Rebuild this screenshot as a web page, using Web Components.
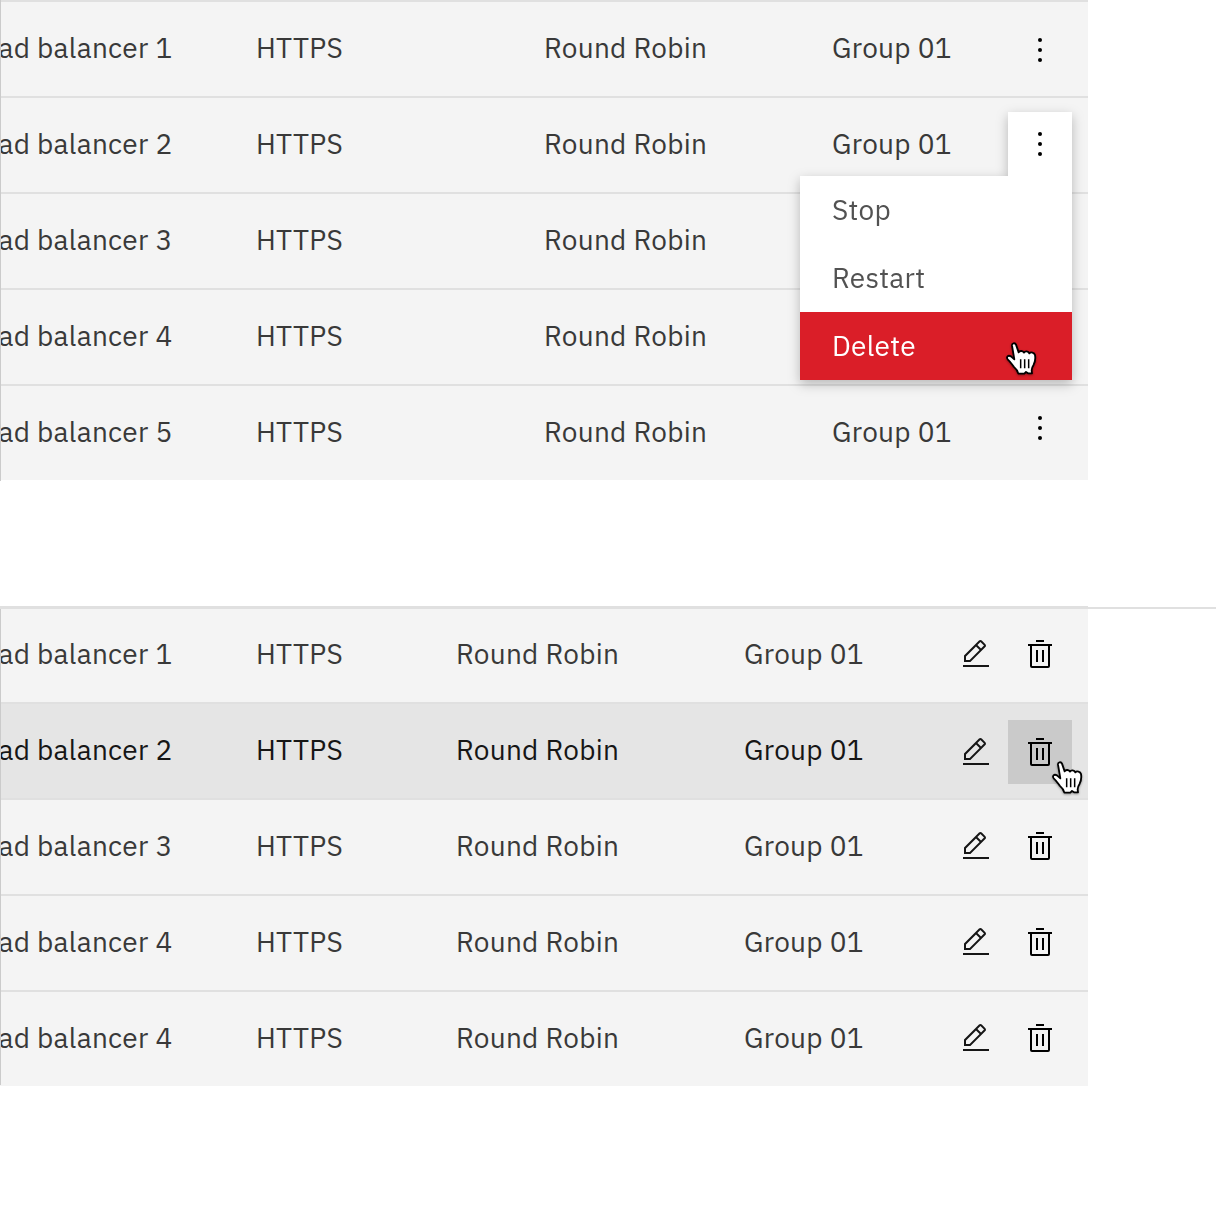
<!DOCTYPE html>
<html lang="en">
<head>
<meta charset="utf-8">
<title>Load balancers</title>
<style>
html,body{margin:0;background:#fff}
body{width:1216px;height:1216px;overflow:hidden;font:400 28px/36px "IBM Plex Sans",Inter,"Noto Sans",sans-serif;letter-spacing:.28px}
</style>
</head>
<body>
<balancer-page></balancer-page>
<script>
function define(name, html) {
  const tpl = document.createElement('template');
  tpl.innerHTML = html;
  customElements.define(name, class extends HTMLElement {
    connectedCallback() {
      if (this.shadowRoot) return;
      this.attachShadow({ mode: 'open' }).append(tpl.content.cloneNode(true));
    }
  });
}

define('icon-overflow', `<style>:host{display:block;width:32px;height:32px}svg{display:block}</style>
<svg width="32" height="32" viewBox="0 0 32 32"><circle cx="16" cy="6" r="2"/><circle cx="16" cy="16" r="2"/><circle cx="16" cy="26" r="2"/></svg>`);

define('icon-edit', `<style>:host{display:block;width:32px;height:32px}svg{display:block}</style>
<svg width="32" height="32" viewBox="0 0 32 32" fill="#161616"><rect x="3" y="27" width="26" height="2"/><path d="M25.4 9c.8-.8.8-2 0-2.8l-3.6-3.6c-.8-.8-2-.8-2.8 0l-15 15V24h6.4zM20.4 4 24 7.6l-3 3L17.4 7zM6 22v-3.6l10-10 3.6 3.6-10 10z"/></svg>`);

define('icon-trash', `<style>:host{display:block;width:32px;height:32px}svg{display:block}</style>
<svg width="32" height="32" viewBox="0 0 32 32"><path d="M12 12h2v12h-2zM18 12h2v12h-2zM4 6v2h2v20a2 2 0 0 0 2 2h16a2 2 0 0 0 2-2V8h2V6zm4 22V8h16v20zM12 2h8v2h-8z"/></svg>`);

define('hand-cursor', `<style>:host{display:block;width:40px;height:40px}svg{display:block;filter:drop-shadow(0 1px 1px rgba(0,0,0,.35))}</style>
<svg width="40" height="40" viewBox="40 30 120 120"><path fill="#fff" stroke="#000" stroke-width="5.500" stroke-linejoin="round" d="M67 47C66 39 76 37 79 44L87 67C90 61 100 62 103 68C106 62 116 63 119 70C123 65 134 67 136 75C138 86 136 96 132 104C128 110 126 114 126 121L127 130H115L109 126L104 131H86C84 122 79 116 72 110C66 102 62 95 54 88C49 81 55 74 64 79L74 88Z"/><path d="M93 88V115M105 88V115M117 88V115" stroke="#000" stroke-width="4.500" fill="none"/></svg>`);

define('row-action', `<style>
:host{display:flex;align-items:center;justify-content:center;width:64px;height:64px;flex:none;position:relative}
:host([active]){background:#cacaca}
</style><slot></slot>`);

define('menu-item', `<style>
:host{display:flex;height:68px;box-sizing:border-box;align-items:center;padding-left:32px;color:#525252;position:relative}
:host([danger]){background:#da1e28;color:#fff}
</style><slot></slot>`);

define('overflow-menu', `<style>
:host{display:flex;flex-direction:column;align-items:flex-end;position:absolute;right:16px;top:14px;width:272px;z-index:2;filter:drop-shadow(0 4px 6px rgba(0,0,0,.25))}
.trigger{width:64px;height:64px;display:flex;align-items:center;justify-content:center;background:#fff}
.list{width:272px;background:#fff}
hand-cursor{position:absolute;left:203px;top:28px}
</style>
<div class="trigger"><icon-overflow></icon-overflow></div>
<div class="list">
<menu-item>Stop</menu-item>
<menu-item>Restart</menu-item>
<menu-item danger>Delete<hand-cursor></hand-cursor></menu-item>
</div>`);

define('data-row', `<style>
:host{display:grid;grid-template-columns:var(--cols);height:96px;box-sizing:border-box;border-top:2px solid #e0e0e0;background:#f4f4f4;color:#393939;position:relative}
:host([first]){border-top-width:var(--first,2px)}
:host([hover]){background:#e5e5e5;color:#161616}
.cell{padding-top:28px;min-width:0;white-space:pre}
.name{margin-left:-1.6px}
:host([first]) .cell{padding-top:calc(30px - var(--first,2px))}
.actions{display:flex;justify-content:flex-end;padding-right:16px}
</style>
<div class="cell name"><slot name="name"></slot></div><div class="cell"><slot name="protocol"></slot></div>
<div class="cell"><slot name="method"></slot></div><div class="cell"><slot name="group"></slot></div>
<div class="actions"><slot name="actions"></slot></div><slot></slot>`);

define('data-table', `<style>
:host{display:block;width:1088px;flex:none;position:relative}
.edge{position:absolute;left:0;top:var(--edge-top,0);bottom:var(--edge-bottom,-1px);width:1px;background:#cbcbcb}
</style><slot></slot><div class="edge"></div>`);

const rowHtml = (n, attrs, group, actions, extra = '') => `<data-row ${attrs}>
<span slot="name">ad balancer ${n}</span>
<span slot="protocol">HTTPS</span>
<span slot="method">Round Robin</span>
${group ? `<span slot="group">${group}</span>` : ''}
${actions}${extra}</data-row>`;

const dots = top => `<row-action slot="actions" style="margin-top:${top}px"><icon-overflow></icon-overflow></row-action>`;
const tools = (top, hover) => `<row-action slot="actions" style="margin-top:${top}px"><icon-edit></icon-edit></row-action>
<row-action slot="actions" style="margin-top:${top}px" ${hover ? 'active' : ''}><icon-trash></icon-trash>${hover ? '<hand-cursor style="position:absolute;left:41px;top:39px"></hand-cursor>' : ''}</row-action>`;

define('balancer-page', `<style>
:host{display:flex;flex-direction:column;width:1216px;gap:126px}
.band{display:flex;align-items:flex-start}
.one{--cols:256px 288px 288px 176px 80px}
.two{--cols:256px 200px 288px 200px 144px;--first:3px;--edge-top:3px;--edge-bottom:1px}
.rule{flex:1;height:2px;margin-top:1px;background:#e0e0e0}
</style>
<data-table class="one">
${rowHtml(1, 'first', 'Group 01', dots(16))}
${rowHtml(2, '', 'Group 01', '', '<overflow-menu></overflow-menu>')}
${rowHtml(3, '', '', '')}
${rowHtml(4, '', '', '')}
${rowHtml(5, '', 'Group 01', dots(10))}
</data-table>
<div class="band"><data-table class="two">
${rowHtml(1, 'first', 'Group 01', tools(13))}
${rowHtml(2, 'hover', 'Group 01', tools(16, true))}
${rowHtml(3, '', 'Group 01', tools(14))}
${rowHtml(4, '', 'Group 01', tools(14))}
${rowHtml(4, '', 'Group 01', tools(14))}
</data-table><div class="rule"></div></div>`);
</script>
</body>
</html>
